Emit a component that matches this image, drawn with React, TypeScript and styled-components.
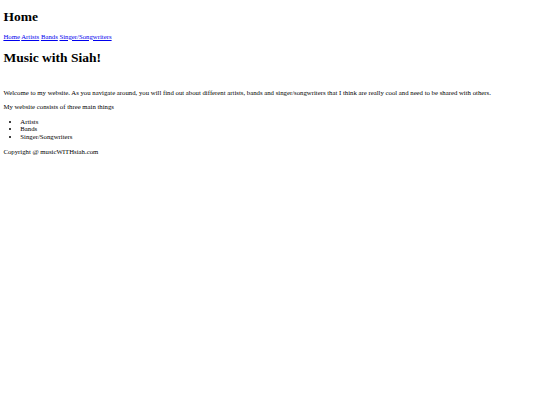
import React from 'react'
import styled, { createGlobalStyle } from 'styled-components'

// the reference is a default-styled page shown at ~0.42 scale
const GlobalStyle = createGlobalStyle`
  html, body {
    background: #fff;
  }
  body {
    margin: 3.4px;
    font-family: "Liberation Serif", "Times New Roman", serif;
    font-size: 6.75px;
    line-height: 7.5px;
    color: #000;
  }
`

const Page = styled.div``

const Title = styled.h1<{ $first?: boolean }>`
  font-size: 13.5px;
  line-height: 15.5px;
  font-weight: bold;
  margin: ${(p) => (p.$first ? '6px' : '10px')} 0 8px;
`

const Nav = styled.nav`
  display: block;
`

const NavLink = styled.a`
  color: #0000ee;
  text-decoration: underline;
`

const Paragraph = styled.p`
  margin: 7.2px 0;
`

const List = styled.ul`
  margin: 7.2px 0;
  padding-left: 16.9px;
  list-style: disc;
`

const Item = styled.li``

const links = ['Home', 'Artists', 'Bands', 'Singer/Songwriters']
const things = ['Artists', 'Bands', 'Singer/Songwriters']

const App = () => {
  return (
    <Page>
      <GlobalStyle />
      <Title $first>Home</Title>
      <Nav>
        {links.map((l, i) => (
          <React.Fragment key={l}>
            <NavLink href="#">{l}</NavLink>
            {i < links.length - 1 ? ' ' : null}
          </React.Fragment>
        ))}
      </Nav>
      <Title>Music with Siah!</Title>
      <br />
      <Paragraph>
        Welcome to my website. As you navigate around, you will find out about different artists, bands and
        singer/songwriters that I think are really cool and need to be shared with others.
      </Paragraph>
      <Paragraph>My website consists of three main things</Paragraph>
      <List>
        {things.map((t) => (
          <Item key={t}>{t}</Item>
        ))}
      </List>
      <Paragraph>Copyright @ musicWITHsiah.com</Paragraph>
    </Page>
  )
}

export default App
